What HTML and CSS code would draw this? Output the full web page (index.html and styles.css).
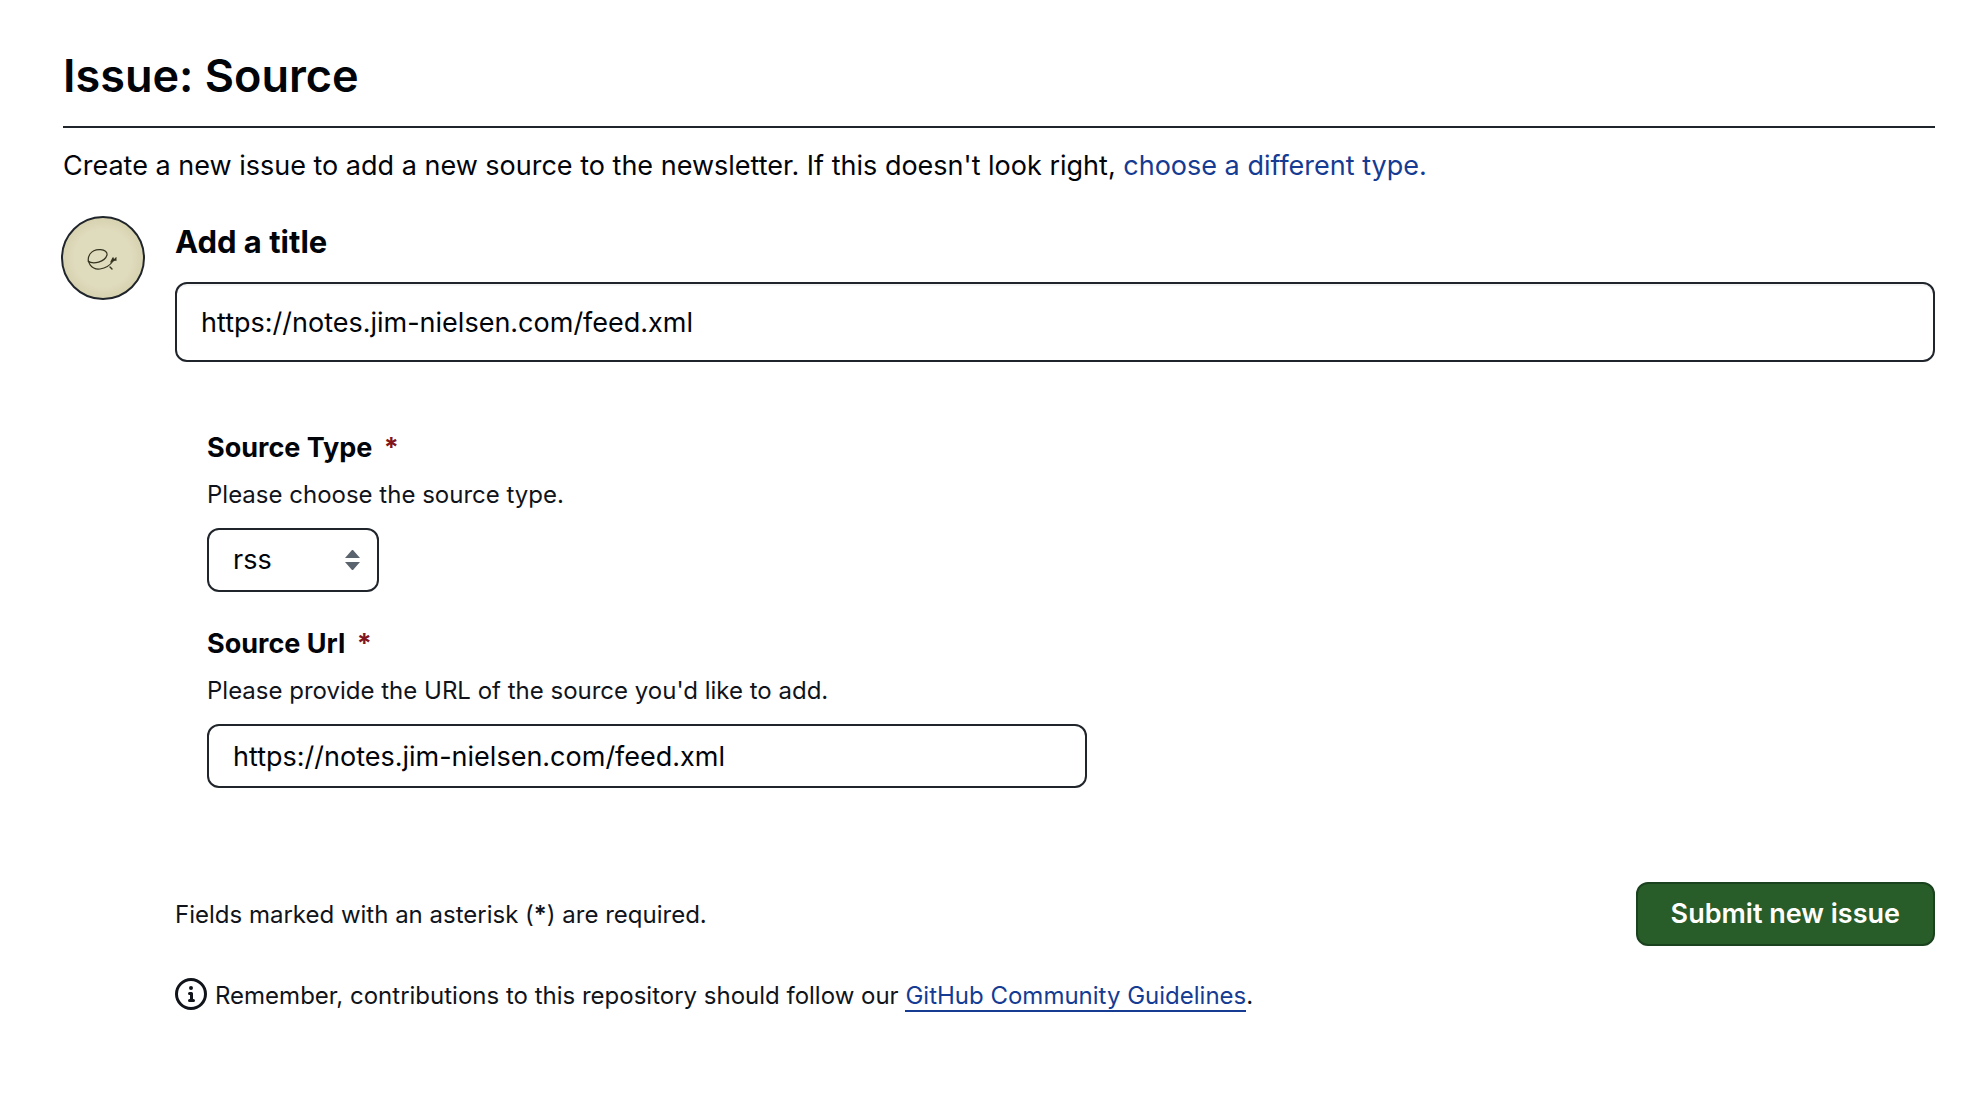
FILE: index.html
```html
<!DOCTYPE html>
<html lang="en">
<head>
<meta charset="utf-8">
<meta name="viewport" content="width=device-width, initial-scale=1">
<title>Issue: Source</title>
<link rel="stylesheet" href="styles.css">
</head>
<body>
<main class="page">
  <header class="page-header">
    <h1 class="page-title">Issue: Source</h1>
  </header>
  <p class="intro">Create a new issue to add a new source to the newsletter. If this doesn't look right, <a class="link" href="#types">choose a different type.</a></p>
  <form class="issue">
    <svg class="avatar" viewBox="0 0 84 84" role="img" aria-label="Your avatar">
      <defs>
        <radialGradient id="paper"><stop offset="0.7" stop-color="#dfdbbd"/><stop offset="1" stop-color="#d6d1ae"/></radialGradient>
      </defs>
      <circle cx="42" cy="42" r="41" fill="url(#paper)" stroke="#20252c" stroke-width="2"/>
      <g fill="none" stroke="#33331f" stroke-width="1.2" stroke-linecap="round">
        <path d="M27 45C32 49 44 46 46 39C47 33 34 31 29 38C24 46 31 54 39 53C46 52 50 48 52 45"/>
        <path d="M50 46L52 42M51 45L54 44L55 42M52 43L55 44M49 51L51 53" stroke-width="1.4"/>
      </g>
    </svg>
    <div class="content">
      <label class="title-label" for="title">Add a title</label>
      <input class="input input-title" id="title" type="text" value="https://notes.jim-nielsen.com/feed.xml">
      <div class="fields">
        <div class="field">
          <label class="field-label" for="type">Source Type <span class="required">*</span></label>
          <p class="hint" id="type-hint">Please choose the source type.</p>
          <div class="select-wrap">
            <select class="input select" id="type" aria-describedby="type-hint">
              <option>rss</option>
            </select>
            <svg class="select-arrows" viewBox="0 0 16 20" aria-hidden="true"><path d="M0 8L7 0H8L15 8ZM0 12H15L8 20H7Z"/></svg>
          </div>
        </div>
        <div class="field">
          <label class="field-label" for="url">Source Url <span class="required">*</span></label>
          <p class="hint" id="url-hint">Please provide the URL of the source you'd like to add.</p>
          <input class="input input-url" id="url" type="text" value="https://notes.jim-nielsen.com/feed.xml" aria-describedby="url-hint">
        </div>
      </div>
      <div class="actions">
        <p class="note">Fields marked with an asterisk (<span class="asterisk">*</span>) are required.</p>
        <button class="submit" type="button">Submit new issue</button>
      </div>
      <div class="reminder">
        <svg class="info" viewBox="0 0 16 16" aria-hidden="true"><path d="M0 8a8 8 0 1 1 16 0A8 8 0 0 1 0 8Zm8-6.5a6.5 6.5 0 1 0 0 13 6.5 6.5 0 0 0 0-13ZM6.500 7.750A.75.75 0 0 1 7.250 7h1a.75.75 0 0 1 .75.75v2.750h.25a.75.75 0 0 1 0 1.500h-2a.75.75 0 0 1 0-1.500h.25v-2h-.25a.75.75 0 0 1-.75-.75ZM8 6a1 1 0 1 1 0-2 1 1 0 0 1 0 2Z"/></svg>
        <p class="note">Remember, contributions to this repository should follow our <a class="link link-underlined" href="#guidelines">GitHub Community Guidelines</a>.</p>
      </div>
    </div>
  </form>
</main>
</body>
</html>
```
FILE: styles.css
```css
* {
  box-sizing: border-box;
}

body {
  margin: 0;
  background: #fff;
  color: #010409;
  font-family: Inter, "Liberation Sans", sans-serif;
  font-size: 27px;
  line-height: 42px;
}

p {
  margin: 0;
}

.page {
  padding: 40px 33px 40px 63px;
}

.page-header {
  padding-bottom: 14px;
  border-bottom: 2px solid #20252c;
}

.page-title {
  margin: 0;
  font-size: 45px;
  font-weight: 600;
  line-height: 72px;
}

.intro {
  padding-top: 17px;
}

.link {
  color: #153b92;
  text-decoration: none;
}

.link-underlined {
  border-bottom: 2px solid #153b92;
}

.issue {
  display: flex;
  align-items: flex-start;
  gap: 30px;
  margin: 29px 0 0 -2px;
}

.avatar {
  flex: none;
  width: 84px;
  height: 84px;
}

.content {
  flex: 1;
  min-width: 0;
}

.title-label {
  display: block;
  padding: 2px 0 16px;
  font-size: 31px;
  font-weight: 700;
  line-height: 48px;
}

.input {
  display: block;
  width: 100%;
  height: 64px;
  padding: 0 24px;
  border: 2px solid #20252c;
  border-radius: 12px;
  background: #fff;
  color: inherit;
  font: inherit;
}

.input-title {
  height: 80px;
  box-shadow: inset 0 2px #f4f4f4;
}

.input-url {
  max-width: 880px;
}

.fields {
  display: grid;
  gap: 31px;
  padding: 65px 32px 94px;
}

.field-label {
  display: block;
  font-weight: 700;
}

.required {
  margin-left: 5px;
  color: #82151c;
}

.hint,
.note {
  color: #10141a;
  font-size: 24px;
  line-height: 36px;
}

.hint {
  padding: 8px 0 15px;
}

.select-wrap {
  position: relative;
  width: 172px;
}

.select {
  appearance: none;
}

.select-arrows {
  position: absolute;
  top: 22px;
  right: 18px;
  width: 16px;
  height: 20px;
  fill: #59636e;
  pointer-events: none;
}

.actions {
  display: flex;
  align-items: baseline;
  justify-content: space-between;
  gap: 24px;
}

.asterisk {
  font-weight: 600;
}

.submit {
  flex: none;
  height: 64px;
  padding: 0 33px;
  border: 2px solid #1b421f;
  border-radius: 12px;
  background: #285c28;
  color: #fff;
  font: inherit;
  font-weight: 600;
}

.reminder {
  display: flex;
  align-items: flex-start;
  gap: 8px;
  margin-top: 32px;
}

.info {
  flex: none;
  width: 32px;
  height: 32px;
  fill: #10141a;
}
```
